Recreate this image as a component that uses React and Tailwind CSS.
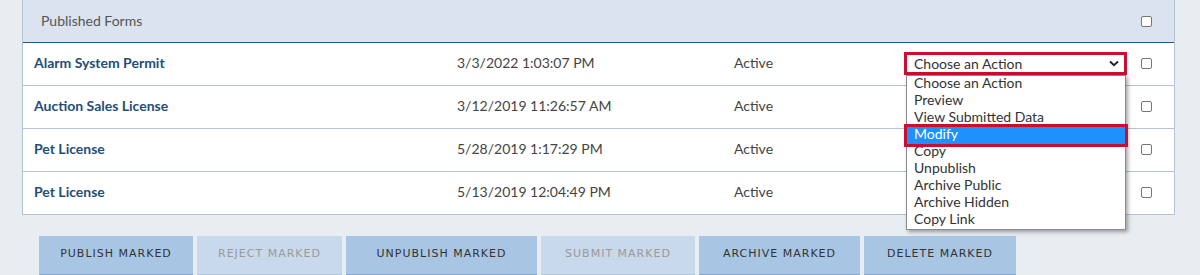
const forms = [
  { name: "Alarm System Permit", date: "3/3/2022 1:03:07 PM", status: "Active" },
  { name: "Auction Sales License", date: "3/12/2019 11:26:57 AM", status: "Active" },
  { name: "Pet License", date: "5/28/2019 1:17:29 PM", status: "Active" },
  { name: "Pet License", date: "5/13/2019 12:04:49 PM", status: "Active" },
];

const actions = [
  "Choose an Action",
  "Preview",
  "View Submitted Data",
  "Modify",
  "Copy",
  "Unpublish",
  "Archive Public",
  "Archive Hidden",
  "Copy Link",
];

const buttons = [
  { label: "PUBLISH MARKED", w: "w-[154px]" },
  { label: "REJECT MARKED", w: "w-[145px]", disabled: true },
  { label: "UNPUBLISH MARKED", w: "w-[191px]" },
  { label: "SUBMIT MARKED", w: "w-[154px]", disabled: true },
  { label: "ARCHIVE MARKED", w: "w-[161px]" },
  { label: "DELETE MARKED", w: "w-[152px]" },
];

const Checkbox = () => (
  <span className="block w-[11px] h-[11px] rounded-[2px] border border-[#767676] bg-white" />
);

const ActionSelect = ({ open }) => (
  <div className="relative w-[223px]">
    <div className="flex items-center justify-between h-[23px] border-[3px] border-[#c8102e] bg-white pl-[7px] pr-[5px] text-[14px] text-[#333]">
      <span className="leading-[14px]">Choose an Action</span>
      <svg width="10" height="7" viewBox="0 0 10 7">
        <path d="M1 1.5 L5 5.2 L9 1.5" fill="none" stroke="#222" strokeWidth="2" />
      </svg>
    </div>
    {open && (
      <ul className="absolute left-[2px] top-[23px] z-10 w-[220px] border border-[#8a8a8a] bg-white shadow-[2px_2px_4px_rgba(0,0,0,0.35)]">
        {actions.map((a) => (
          <li
            key={a}
            className={
              a === "Modify"
                ? "h-[17px] leading-[13px] pl-[7px] text-[14px] bg-[#1e90ff] text-white outline-[3px] outline-solid outline-[#c8102e]"
                : "h-[17px] leading-[13px] pl-[7px] text-[14px] text-[#333]"
            }
          >
            {a}
          </li>
        ))}
      </ul>
    )}
  </div>
);

export default function App() {
  return (
    <div
      className="w-full h-[275px] overflow-hidden bg-[#e8edf2] pl-[22px]"
      style={{ fontFamily: "Lato, 'Noto Sans', sans-serif" }}
    >
      <div className="w-[1153px] border-x border-b border-[#b4c3d4] bg-white">
        <div className="flex items-center justify-between h-[43px] bg-[#dae3ef] border-b border-[#1f5a8c] pl-[18px] pr-[22px]">
          <span className="text-[14px] text-[#555] pb-[2px]">Published Forms</span>
          <Checkbox />
        </div>
        {forms.map((f, i) => (
          <div
            key={i}
            className={
              "grid grid-cols-[434px_277px_170px_237px_1fr] items-center text-[14px]" +
              (i < forms.length - 1 ? " h-[43px] border-b border-[#b4c3d4]" : " h-[42px]")
            }
          >
            <span className="pl-[11px] pb-[4px] font-bold text-[#1f4e79]">{f.name}</span>
            <span className="pb-[4px] text-[#444]">{f.date}</span>
            <span className="pb-[4px] text-[#444]">{f.status}</span>
            <div className="pb-[1px]">{i === 0 && <ActionSelect open />}</div>
            <div className="pb-[1px]">
              <Checkbox />
            </div>
          </div>
        ))}
      </div>
      <div className="flex gap-[4px] mt-[21px] ml-[17px]">
        {buttons.map((b) => (
          <div
            key={b.label}
            className={
              "h-[40px] flex items-center justify-center border-b-2 text-[11px] tracking-[1px] pb-[2px] " +
              b.w +
              (b.disabled
                ? " bg-[#c8d9eb] border-[#b3c8dd] text-[#9a9a9a]"
                : " bg-[#a8c6e4] border-[#87a8ca] text-[#333]")
            }
            style={{ fontFamily: "'DejaVu Sans', sans-serif" }}
          >
            {b.label}
          </div>
        ))}
      </div>
    </div>
  );
}
